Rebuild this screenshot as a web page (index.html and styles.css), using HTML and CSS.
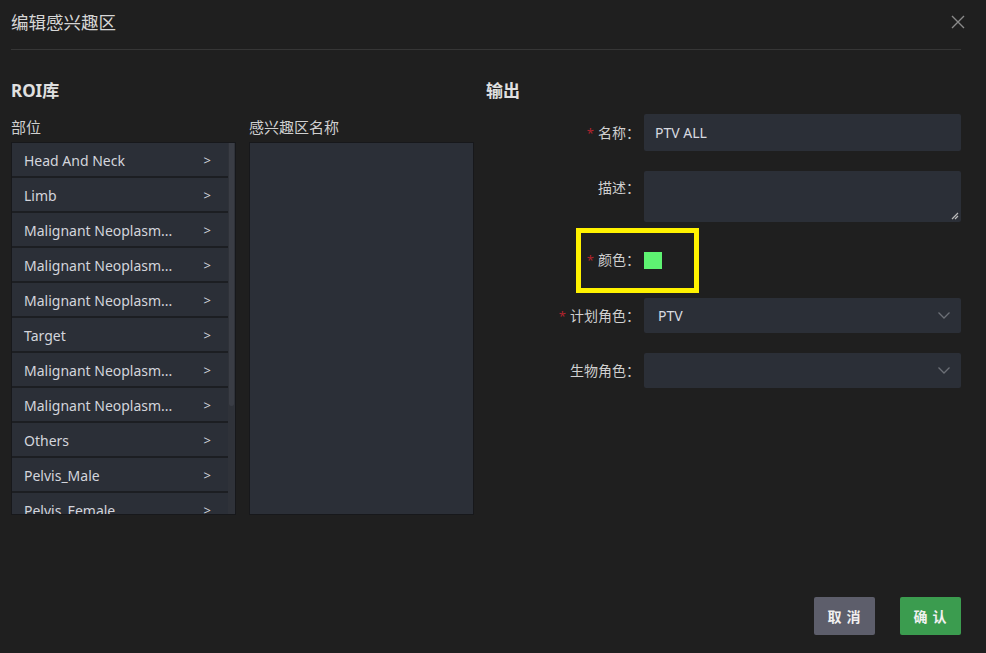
FILE: index.html
```html
<!DOCTYPE html>
<html lang="zh">
<head>
<meta charset="utf-8">
<title>编辑感兴趣区</title>
<link rel="stylesheet" href="styles.css">
</head>
<body>
<div class="dialog">
  <div class="header">
    <div class="title">编辑感兴趣区</div>
    <svg class="close" width="14" height="14" viewBox="0 0 14 14"><path d="M1 1 L13 13 M13 1 L1 13" stroke="#8a8a8a" stroke-width="1.4" fill="none"/></svg>
  </div>
  <div class="content">
    <div class="library">
      <div class="section-title">ROI库</div>
      <div class="columns">
        <div class="col col-part">
          <div class="col-label">部位</div>
          <div class="listbox">
            <div class="list">
              <div class="row"><span>Head And Neck</span><span class="gt">&gt;</span></div>
              <div class="row"><span>Limb</span><span class="gt">&gt;</span></div>
              <div class="row"><span>Malignant Neoplasm...</span><span class="gt">&gt;</span></div>
              <div class="row"><span>Malignant Neoplasm...</span><span class="gt">&gt;</span></div>
              <div class="row"><span>Malignant Neoplasm...</span><span class="gt">&gt;</span></div>
              <div class="row"><span>Target</span><span class="gt">&gt;</span></div>
              <div class="row"><span>Malignant Neoplasm...</span><span class="gt">&gt;</span></div>
              <div class="row"><span>Malignant Neoplasm...</span><span class="gt">&gt;</span></div>
              <div class="row"><span>Others</span><span class="gt">&gt;</span></div>
              <div class="row"><span>Pelvis_Male</span><span class="gt">&gt;</span></div>
              <div class="row"><span>Pelvis_Female</span><span class="gt">&gt;</span></div>
            </div>
            <div class="scrolltrack"><div class="thumb"></div></div>
          </div>
        </div>
        <div class="col col-name">
          <div class="col-label">感兴趣区名称</div>
          <div class="namebox"></div>
        </div>
      </div>
    </div>
    <div class="output">
      <div class="section-title">输出</div>
      <div class="form">
        <div class="frow h37">
          <label class="flabel"><span class="req">*</span>名称：</label>
          <div class="input">PTV ALL</div>
        </div>
        <div class="frow top">
          <label class="flabel">描述：</label>
          <div class="textarea">
            <svg class="grip" width="8" height="8" viewBox="0 0 8 8"><path d="M7 1 L1 7 M7 4 L4 7" stroke="#bbb" stroke-width="1.2"/></svg>
          </div>
        </div>
        <div class="frow h36 color-row">
          <div class="highlight"></div>
          <label class="flabel"><span class="req">*</span>颜色：</label>
          <div class="swatch"></div>
        </div>
        <div class="frow h35">
          <label class="flabel"><span class="req">*</span>计划角色：</label>
          <div class="select"><span>PTV</span><svg class="chev" width="12" height="7" viewBox="0 0 12 7"><path d="M0.5 0.5 L6 6 L11.5 0.5" stroke="#6c6f76" stroke-width="1.3" fill="none"/></svg></div>
        </div>
        <div class="frow h35">
          <label class="flabel">生物角色：</label>
          <div class="select"><span></span><svg class="chev" width="12" height="7" viewBox="0 0 12 7"><path d="M0.5 0.5 L6 6 L11.5 0.5" stroke="#6c6f76" stroke-width="1.3" fill="none"/></svg></div>
        </div>
      </div>
    </div>
  </div>
  <div class="footer">
    <button class="btn cancel">取 消</button>
    <button class="btn ok">确 认</button>
  </div>
</div>
</body>
</html>
```
FILE: styles.css
```css
* { box-sizing: border-box; }
html, body {
  margin: 0;
  padding: 0;
  background: #1f1f1f;
  font-family: "Noto Sans", "Noto Sans CJK SC", sans-serif;
  color: #d4d4d4;
}
.dialog {
  width: 986px;
  height: 653px;
  display: flex;
  flex-direction: column;
}
.header {
  margin: 0 25px 0 11px;
  height: 50px;
  border-bottom: 1px solid #363636;
  display: flex;
  align-items: flex-start;
  justify-content: space-between;
}
.title {
  margin-top: 9px;
  font-size: 17.5px;
  line-height: 26px;
  color: #d6d6d6;
}
.close {
  margin-top: 15px;
  margin-right: -4px;
}
.content {
  display: flex;
  padding: 30px 25px 0 11px;
}
.section-title {
  font-size: 17px;
  font-weight: bold;
  line-height: 22px;
  color: #e0e0e0;
}
.library {
  width: 475px;
}
.columns {
  display: flex;
  gap: 13px;
  margin-top: 15px;
}
.col-label {
  font-size: 15px;
  line-height: 20px;
  color: #d0d0d0;
  margin-bottom: 5px;
}
.col-part { width: 225px; }
.col-name { width: 225px; }
.listbox {
  display: flex;
  height: 373px;
  border: 1px solid #17181b;
  background: #2b2f37;
  overflow: hidden;
}
.list {
  flex: 1;
  overflow: hidden;
}
.row {
  height: 35px;
  border-bottom: 2px solid #1c1e22;
  display: flex;
  align-items: center;
  justify-content: space-between;
  padding: 1px 17px 0 12px;
  font-size: 14px;
  color: #d3d5dc;
  white-space: nowrap;
}
.gt { font-size: 13px; }
.scrolltrack {
  width: 7px;
  background: #2f3239;
}
.thumb {
  height: 263px;
  margin: 0 1px;
  background: #3a3d45;
  border-radius: 0 0 3px 3px;
}
.namebox {
  height: 373px;
  background: #2b2f37;
  border: 1px solid #17181b;
}
.output {
  flex: 1;
}
.form {
  margin-top: 12px;
  display: flex;
  flex-direction: column;
  gap: 20px;
}
.frow {
  display: flex;
  align-items: center;
  gap: 4px;
  position: relative;
}
.frow.top { align-items: flex-start; }
.h37 { height: 37px; }
.h36 { height: 36px; }
.h35 { height: 35px; }
.flabel {
  width: 154px;
  text-align: right;
  font-size: 14px;
  line-height: 20px;
  color: #d0d0d0;
  white-space: nowrap;
}
.frow.top .flabel { margin-top: 7px; }
.req {
  color: #b0242e;
  margin-right: 4px;
  font-size: 13px;
}
.input, .select, .textarea {
  width: 317px;
  background: #2b2f37;
  border-radius: 2px;
  font-size: 14px;
  color: #d8dae0;
}
.input {
  height: 37px;
  line-height: 37px;
  padding: 0 11px;
}
.textarea {
  height: 51px;
  display: flex;
  align-items: flex-end;
  justify-content: flex-end;
  padding: 2px;
}
.grip { display: block; }
.select {
  height: 35px;
  display: flex;
  align-items: center;
  justify-content: space-between;
  padding: 0 11px 0 14px;
}
.swatch {
  width: 18px;
  height: 17px;
  background: #5ef372;
}
.highlight {
  position: absolute;
  left: 90px;
  top: -14px;
  width: 123px;
  height: 65px;
  border: 5px solid #fff200;
}
.footer {
  margin-top: auto;
  display: flex;
  justify-content: flex-end;
  gap: 25px;
  padding: 0 25px 18px 0;
}
.btn {
  width: 61px;
  height: 38px;
  border: none;
  border-radius: 2px;
  font-family: "Noto Sans CJK SC", sans-serif;
  font-size: 14px;
  font-weight: bold;
  color: #f0f0f0;
  letter-spacing: 1px;
}
.cancel { background: #5d5e6b; }
.ok { background: #3b9c4f; }
```
